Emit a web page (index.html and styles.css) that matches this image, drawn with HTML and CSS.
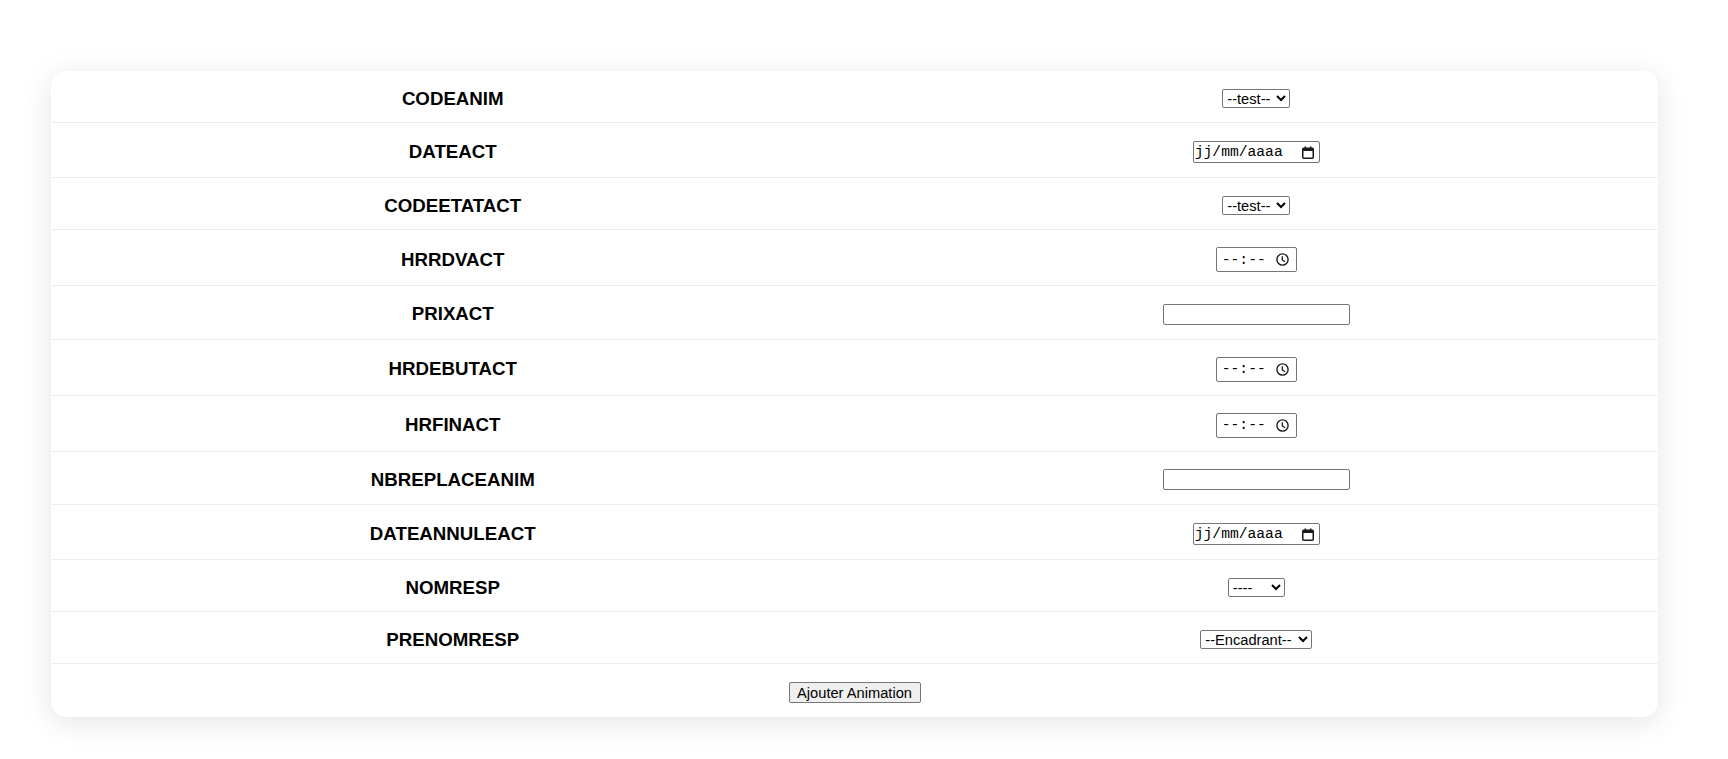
FILE: index.html
```html
<!DOCTYPE html>
<html lang="fr">
<head>
<meta charset="utf-8">
<title>Ajouter Animation</title>
<link rel="stylesheet" href="styles.css">
</head>
<body>
<form class="card">
  <div class="row row--s">
    <div class="label">CODEANIM</div>
    <div class="field"><select class="sel sel--test"><option>--test--</option></select></div>
  </div>
  <div class="row row--d">
    <div class="label">DATEACT</div>
    <div class="field">
      <label class="box box--date"><input class="box__input" type="text" placeholder="jj/mm/aaaa">
        <svg class="icon" width="12" height="13" viewBox="0 0 12 13"><rect x="0.75" y="2.25" width="10.5" height="10" rx="1" fill="none" stroke="#1b1b1b" stroke-width="1.5"/><rect x="0.75" y="2.25" width="10.5" height="2.75" fill="#1b1b1b"/><rect x="2.5" y="0.5" width="1.6" height="2.5" fill="#1b1b1b"/><rect x="7.9" y="0.5" width="1.6" height="2.5" fill="#1b1b1b"/></svg>
      </label>
    </div>
  </div>
  <div class="row row--s">
    <div class="label">CODEETATACT</div>
    <div class="field"><select class="sel sel--test"><option>--test--</option></select></div>
  </div>
  <div class="row row--t">
    <div class="label">HRRDVACT</div>
    <div class="field">
      <label class="box box--time"><input class="box__input" type="text" placeholder="--:--">
        <svg class="icon" width="13" height="13" viewBox="0 0 13 13"><circle cx="6.5" cy="6.5" r="5.6" fill="none" stroke="#1b1b1b" stroke-width="1.4"/><path d="M6.3 3.3V6.9L8.9 8.8" fill="none" stroke="#1b1b1b" stroke-width="1.3"/></svg>
      </label>
    </div>
  </div>
  <div class="row row--x">
    <div class="label">PRIXACT</div>
    <div class="field"><input class="txt" type="text"></div>
  </div>
  <div class="row row--t">
    <div class="label">HRDEBUTACT</div>
    <div class="field">
      <label class="box box--time"><input class="box__input" type="text" placeholder="--:--">
        <svg class="icon" width="13" height="13" viewBox="0 0 13 13"><circle cx="6.5" cy="6.5" r="5.6" fill="none" stroke="#1b1b1b" stroke-width="1.4"/><path d="M6.3 3.3V6.9L8.9 8.8" fill="none" stroke="#1b1b1b" stroke-width="1.3"/></svg>
      </label>
    </div>
  </div>
  <div class="row row--t">
    <div class="label">HRFINACT</div>
    <div class="field">
      <label class="box box--time"><input class="box__input" type="text" placeholder="--:--">
        <svg class="icon" width="13" height="13" viewBox="0 0 13 13"><circle cx="6.5" cy="6.5" r="5.6" fill="none" stroke="#1b1b1b" stroke-width="1.4"/><path d="M6.3 3.3V6.9L8.9 8.8" fill="none" stroke="#1b1b1b" stroke-width="1.3"/></svg>
      </label>
    </div>
  </div>
  <div class="row row--x">
    <div class="label">NBREPLACEANIM</div>
    <div class="field"><input class="txt" type="text"></div>
  </div>
  <div class="row row--d">
    <div class="label">DATEANNULEACT</div>
    <div class="field">
      <label class="box box--date"><input class="box__input" type="text" placeholder="jj/mm/aaaa">
        <svg class="icon" width="12" height="13" viewBox="0 0 12 13"><rect x="0.75" y="2.25" width="10.5" height="10" rx="1" fill="none" stroke="#1b1b1b" stroke-width="1.5"/><rect x="0.75" y="2.25" width="10.5" height="2.75" fill="#1b1b1b"/><rect x="2.5" y="0.5" width="1.6" height="2.5" fill="#1b1b1b"/><rect x="7.9" y="0.5" width="1.6" height="2.5" fill="#1b1b1b"/></svg>
      </label>
    </div>
  </div>
  <div class="row row--s">
    <div class="label">NOMRESP</div>
    <div class="field"><select class="sel sel--nom"><option>----</option></select></div>
  </div>
  <div class="row row--s">
    <div class="label">PRENOMRESP</div>
    <div class="field"><select class="sel sel--enc"><option>--Encadrant--</option></select></div>
  </div>
  <div class="row row--b">
    <button class="btn" type="button">Ajouter Animation</button>
  </div>
</form>
</body>
</html>
```

FILE: styles.css
```css
html, body {
  margin: 0;
  padding: 0;
  background: #ffffff;
}

body {
  font-family: "Liberation Sans", Arial, sans-serif;
  color: #000;
}

.card {
  margin: 71px 0 42px 51px;
  width: 1607px;
  background: #fff;
  border-radius: 15px;
  box-shadow: 0 5px 30px rgba(0, 0, 0, 0.11);
  overflow: hidden;
}

.row {
  display: grid;
  grid-template-columns: 1fr 1fr;
  align-items: center;
  box-sizing: border-box;
  border-bottom: 1px solid #eeeeee;
}

.row--s { height: 52px; }
.row--d { height: 55px; }
.row--t { height: 56px; }
.row--x { height: 53.5px; }
.row--b {
  height: 53px;
  border-bottom: none;
  display: flex;
  justify-content: center;
  align-items: center;
  padding-top: 4px;
}

.label {
  text-align: center;
  font-weight: bold;
  font-size: 18.7px;
  padding-top: 4px;
}

.field {
  display: flex;
  justify-content: center;
  align-items: center;
  padding-top: 4px;
}

.sel {
  font-family: "Liberation Sans", Arial, sans-serif;
  font-size: 14.67px;
  height: 19px;
  box-sizing: border-box;
  border: 1px solid #767676;
  border-radius: 2px;
  background: #fff;
  color: #000;
  padding: 0;
}
.sel--test { width: 68px; }
.sel--nom { width: 57px; }
.sel--enc { width: 112px; }

.txt {
  box-sizing: border-box;
  width: 187px;
  height: 21px;
  border: 1px solid #767676;
  border-radius: 2px;
  padding: 1px 2px;
  font-size: 14.67px;
  font-family: "Liberation Sans", Arial, sans-serif;
}

.box {
  box-sizing: border-box;
  display: flex;
  align-items: center;
  border: 1px solid #767676;
  border-radius: 2px;
  background: #fff;
}

.box--date {
  width: 127px;
  height: 22px;
  padding: 0 5px 0 1px;
}

.box--time {
  width: 81px;
  height: 25px;
  padding: 0 7px 0 5px;
}

.box__input {
  flex: 1;
  min-width: 0;
  border: none;
  outline: none;
  padding: 0;
  margin: 0;
  background: transparent;
  font-family: "Liberation Mono", "DejaVu Sans Mono", monospace;
  font-size: 14.67px;
  color: #000;
}

.box__input::placeholder {
  color: #000;
  opacity: 1;
}

.icon {
  flex: none;
  display: block;
}

.btn {
  font-family: "Liberation Sans", Arial, sans-serif;
  font-size: 14.67px;
  width: 132px;
  height: 21px;
  box-sizing: border-box;
  padding: 0 6px;
  background: #efefef;
  border: 1px solid #767676;
  border-radius: 2px;
  color: #000;
}
```
